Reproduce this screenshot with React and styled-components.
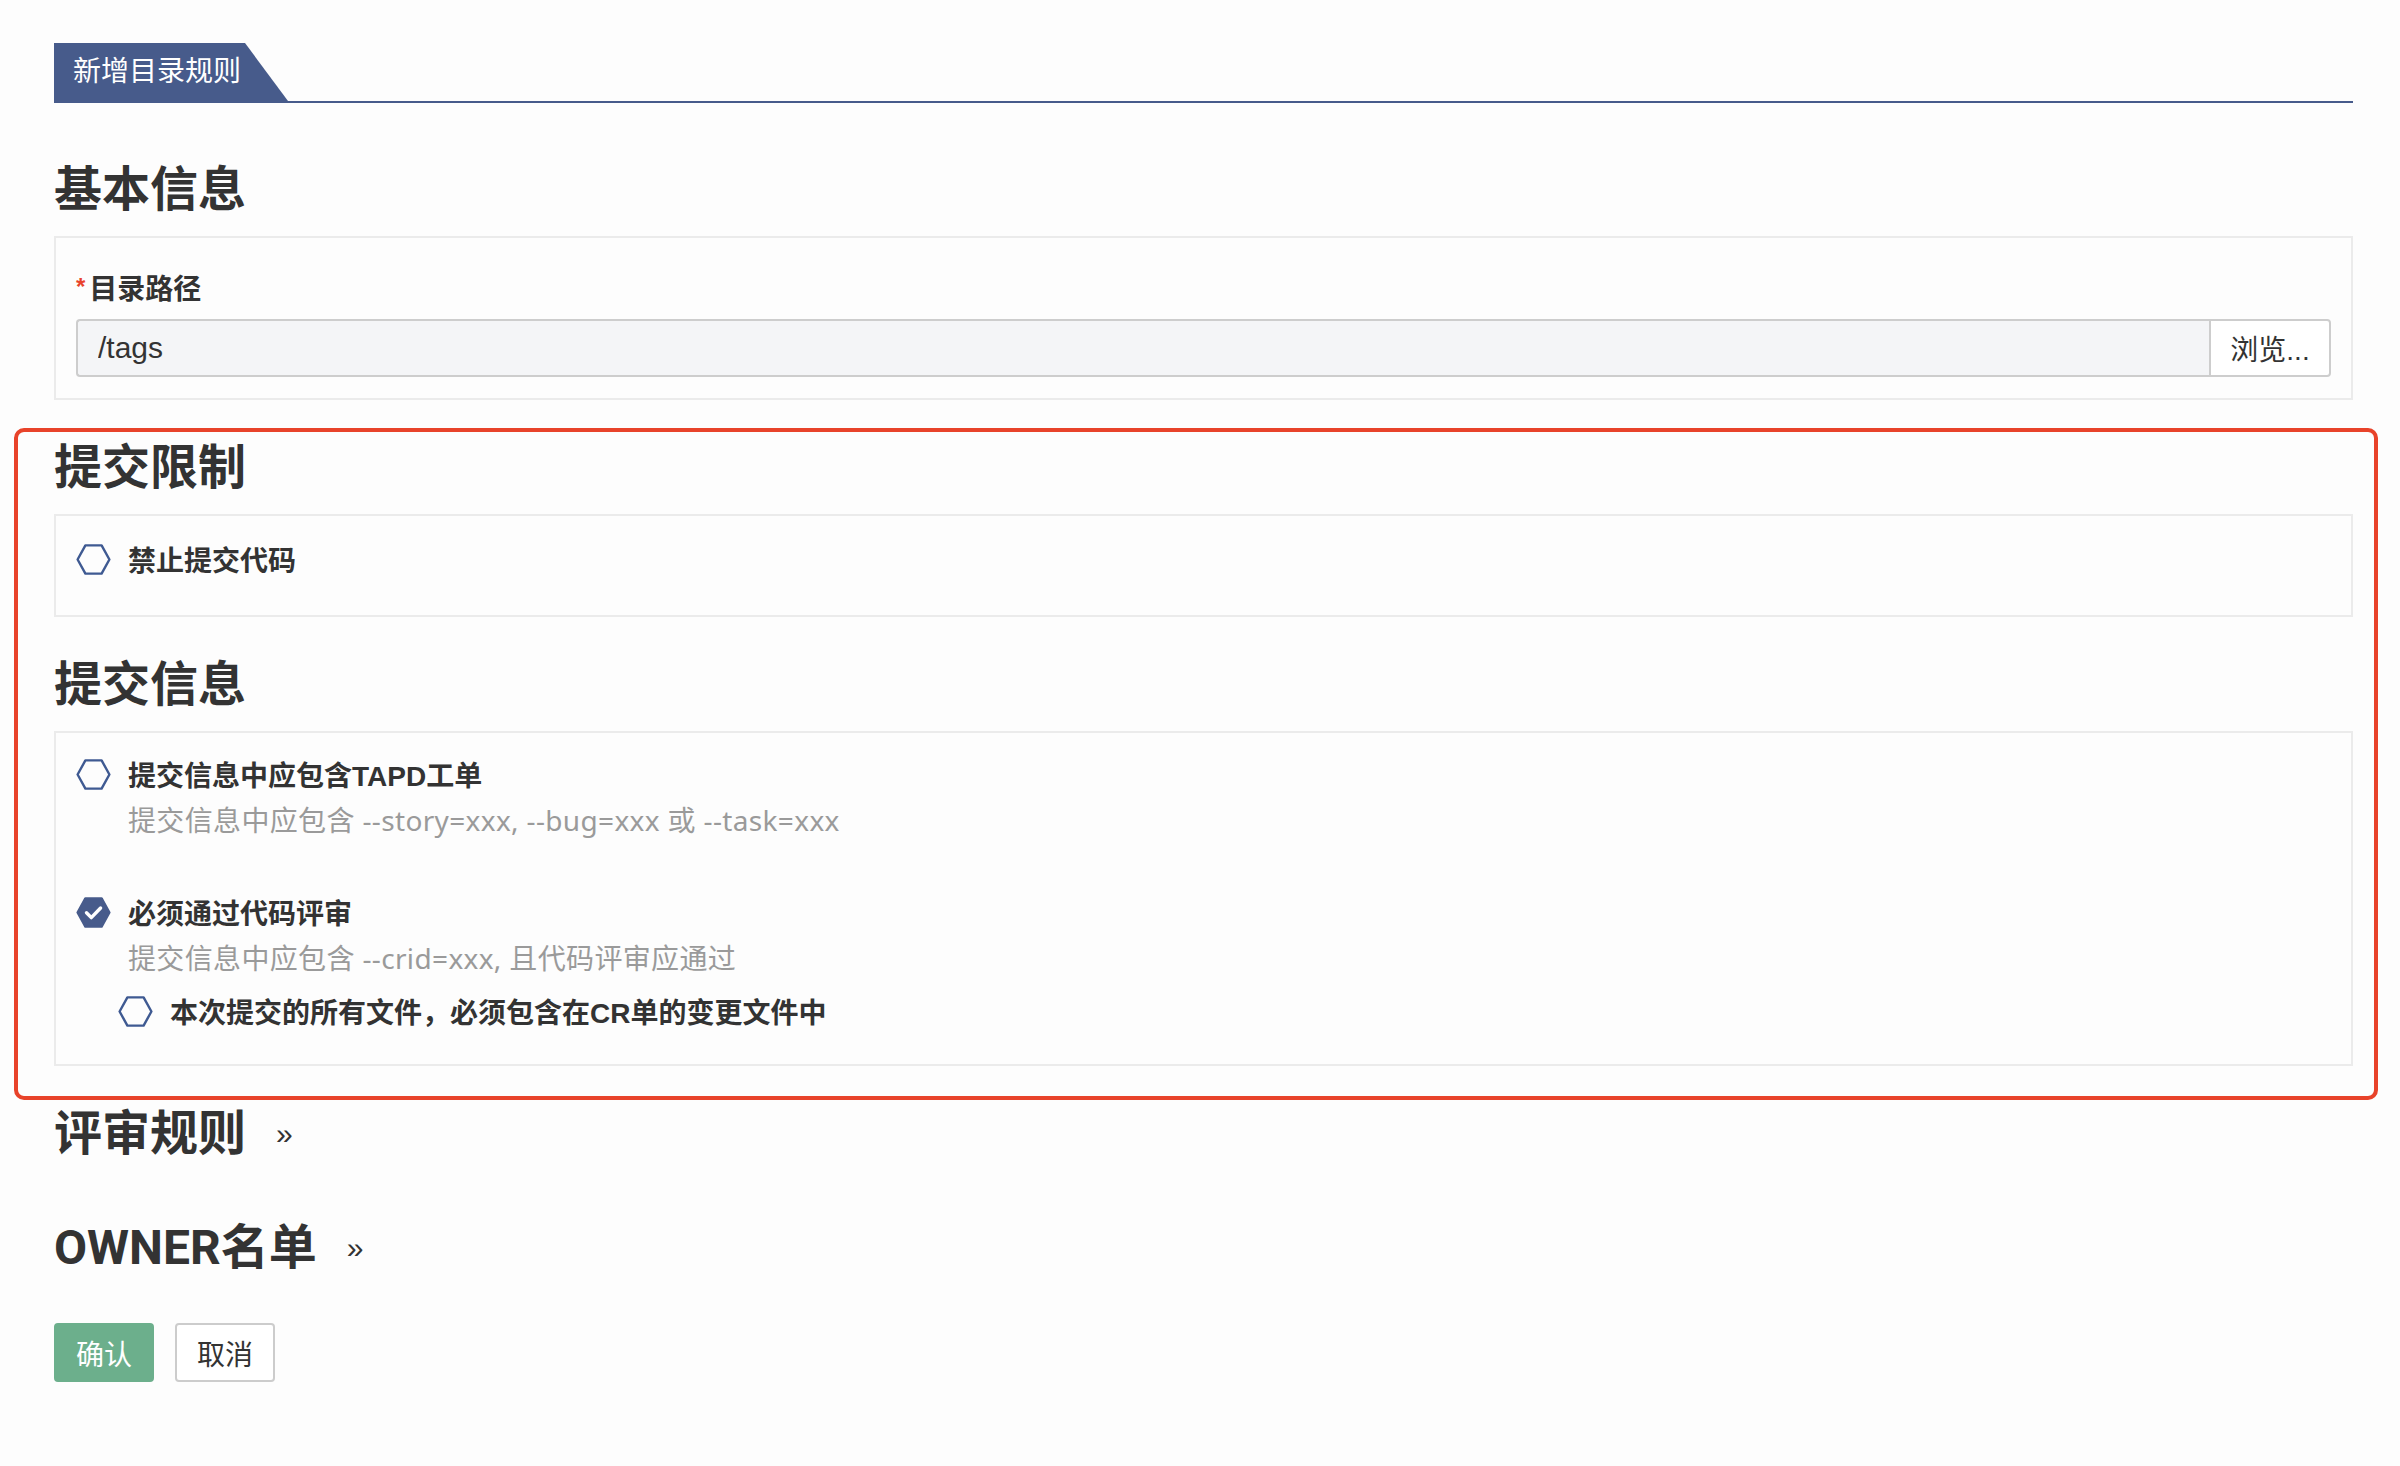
import styled, { createGlobalStyle } from "styled-components";

const GlobalStyle = createGlobalStyle`
  html, body {
    margin: 0;
    background: #fdfdfd;
  }
  body {
    font-family: "Liberation Sans", "Noto Sans CJK SC", sans-serif;
    color: #333;
  }
  * {
    box-sizing: border-box;
  }
`;

const HexCheck = ({ checked }) => (
    <svg width="35" height="31" viewBox="0 0 35 31">
        <polygon
            points="1.6,15.5 9.4,1.4 25.6,1.4 33.4,15.5 25.6,29.6 9.4,29.6"
            fill={checked ? "#475b8b" : "none"}
            stroke={checked ? "#475b8b" : "#3f5a92"}
            strokeWidth="2.4"
            strokeLinejoin="round"
        />
        {checked && (
            <path
                d="M10.5 15.8 L15.3 20.6 L24.6 11"
                fill="none"
                stroke="#fff"
                strokeWidth="3.4"
                strokeLinecap="round"
                strokeLinejoin="round"
            />
        )}
    </svg>
);

const Option = ({ checked, label, desc, indent, gap = 0 }) => (
    <OptionGroup $gap={gap}>
        <OptionRow $indent={indent}>
            <HexCheck checked={checked} />
            <OptionLabel>{label}</OptionLabel>
        </OptionRow>
        {desc && <OptionDesc>{desc}</OptionDesc>}
    </OptionGroup>
);

const App = () => {
    return (
        <>
            <GlobalStyle />
            <Page>
                <TabBar>
                    <Tab>新增目录规则</Tab>
                </TabBar>

                <Section $top={57}>
                    <Heading>基本信息</Heading>
                    <Box $pad="29px 20px 21px">
                        <FieldLabel>
                            <Required>*</Required>目录路径
                        </FieldLabel>
                        <InputGroup>
                            <PathInput readOnly value="/tags" />
                            <BrowseButton>浏览...</BrowseButton>
                        </InputGroup>
                    </Box>
                </Section>

                <Highlight>
                    <Section $top={0}>
                        <Heading>提交限制</Heading>
                        <Box $pad="23px 20px 36px">
                            <Option label="禁止提交代码" />
                        </Box>
                    </Section>
                    <Section>
                        <Heading>提交信息</Heading>
                        <Box $pad="21px 20px 33px">
                            <Option
                                label="提交信息中应包含TAPD工单"
                                desc="提交信息中应包含 --story=xxx, --bug=xxx 或 --task=xxx"
                            />
                            <Option
                                checked
                                gap={52}
                                label="必须通过代码评审"
                                desc="提交信息中应包含 --crid=xxx, 且代码评审应通过"
                            />
                            <Option
                                indent
                                gap={13}
                                label="本次提交的所有文件，必须包含在CR单的变更文件中"
                            />
                        </Box>
                    </Section>
                    <Outline />
                </Highlight>

                <Section>
                    <Heading>
                        评审规则<Expand>»</Expand>
                    </Heading>
                </Section>
                <Section>
                    <Heading>
                        OWNER名单<Expand>»</Expand>
                    </Heading>
                </Section>

                <Actions>
                    <Button $primary>确认</Button>
                    <Button>取消</Button>
                </Actions>
            </Page>
        </>
    );
};

export default App;

const Page = styled.div`
    display: flex;
    flex-direction: column;
    padding: 43px 47px 80px 54px;
`;

const TabBar = styled.div`
    display: flex;
    height: 60px;
    border-bottom: 2px solid #475b8b;
`;

const Tab = styled.div`
    width: 234px;
    height: 58px;
    padding-left: 19px;
    background: #475b8b;
    color: #fff;
    font-size: 28px;
    line-height: 58px;
    clip-path: polygon(0 0, 191px 0, 100% 100%, 0 100%);
`;

const Section = styled.section`
    display: flex;
    flex-direction: column;
    margin-top: ${(props) => (props.$top ?? 38)}px;
`;

const Heading = styled.h2`
    display: flex;
    align-items: center;
    gap: 30px;
    height: 60px;
    margin: 0 0 16px;
    font-family: Roboto, "Noto Sans CJK SC", sans-serif;
    font-size: 48px;
    font-weight: 700;
    line-height: 60px;
    color: #333;
`;

const Expand = styled.span`
    font-family: "Liberation Sans", sans-serif;
    font-size: 30px;
    font-weight: 400;
    color: #333;
`;

const Box = styled.div`
    border: 2px solid #ebebeb;
    background: #fdfdfd;
    padding: ${(props) => props.$pad || "23px 20px 32px"};
`;

const FieldLabel = styled.div`
    display: flex;
    align-items: center;
    height: 40px;
    margin-bottom: 12px;
    font-size: 28px;
    font-weight: 700;
    color: #333;
`;

const Required = styled.span`
    color: #e8432c;
    font-size: 24px;
    margin-right: 4px;
`;

const InputGroup = styled.div`
    display: flex;
    height: 58px;
`;

const PathInput = styled.input`
    flex: 1;
    min-width: 0;
    height: 58px;
    padding: 0 20px;
    border: 2px solid #cdcdcd;
    border-right: none;
    border-radius: 4px 0 0 4px;
    background: #f4f5f7;
    font-family: inherit;
    font-size: 30px;
    color: #333;
    outline: none;
`;

const BrowseButton = styled.div`
    display: flex;
    align-items: center;
    justify-content: center;
    width: 122px;
    border: 2px solid #cdcdcd;
    border-radius: 0 4px 4px 0;
    background: #fff;
    font-size: 28px;
    color: #333;
`;

const Highlight = styled.div`
    position: relative;
    margin-top: 38px;
`;

/* annotation frame drawn over the two rule sections */
const Outline = styled.div`
    position: absolute;
    top: -10px;
    left: -40px;
    right: -25px;
    bottom: -34px;
    border: 4px solid #e8432a;
    border-radius: 10px;
    pointer-events: none;
`;

const OptionGroup = styled.div`
    margin-top: ${(props) => props.$gap}px;
`;

const OptionRow = styled.div`
    display: flex;
    align-items: center;
    gap: 17px;
    height: 40px;
    padding-left: ${(props) => (props.$indent ? 42 : 0)}px;
`;

const OptionLabel = styled.span`
    font-size: 28px;
    font-weight: 600;
    color: #333;
`;

const OptionDesc = styled.div`
    margin: 6px 0 0 52px;
    font-family: "Noto Sans", "Noto Sans CJK SC", sans-serif;
    font-size: 28px;
    line-height: 40px;
    letter-spacing: 0.35px;
    color: #9a9a9a;
`;

const Actions = styled.div`
    display: flex;
    gap: 21px;
    margin-top: 29px;
`;

const Button = styled.div`
    display: flex;
    align-items: center;
    justify-content: center;
    height: 59px;
    padding: 0 20px;
    border: 2px solid ${(props) => (props.$primary ? "#6caf8c" : "#cccccc")};
    border-radius: 4px;
    background: ${(props) => (props.$primary ? "#6caf8c" : "#fff")};
    color: ${(props) => (props.$primary ? "#fff" : "#333")};
    font-size: 28px;
    cursor: pointer;
`;
